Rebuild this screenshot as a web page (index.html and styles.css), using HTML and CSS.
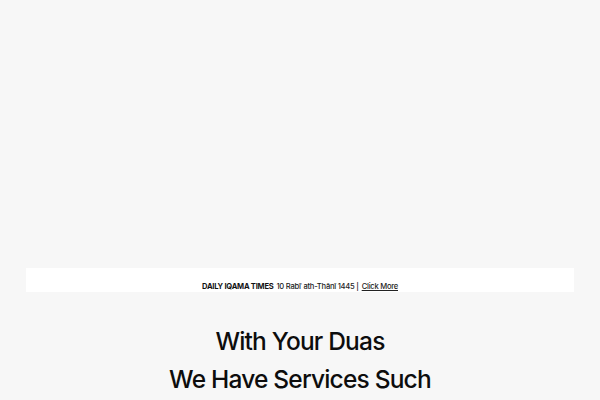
FILE: index.html
```html
<!DOCTYPE html>
<html>
<head>
<meta charset="utf-8">
<link rel="stylesheet" href="styles.css">
</head>
<body>
<div class="page">
  <div class="hero"></div>
  <div class="notice">
    <span class="label">DAILY IQAMA TIMES</span> 10 Rabīʿ ath-Thānī 1445 | <a class="more" href="#">Click More</a>
  </div>
  <section class="intro">
    <h1 class="title">With Your Duas<br>We Have Services Such</h1>
  </section>
</div>
</body>
</html>
```
FILE: styles.css
```css
html, body {
  margin: 0;
  padding: 0;
  background: #f7f7f7;
  font-family: Inter, "Noto Sans", sans-serif;
  color: #111;
}
.page {
  width: 600px;
  height: 400px;
  overflow: hidden;
}
.hero {
  height: 268px;
}
.notice {
  margin: 0 26px;
  height: 24px;
  background: #ffffff;
  display: flex;
  align-items: center;
  justify-content: center;
  font-size: 7.6px;
  font-weight: 500;
  letter-spacing: -0.25px;
  padding-top: 12px;
  box-sizing: border-box;
  color: #222;
}
.label {
  font-weight: 700;
  margin-right: 3px;
  color: #111;
}
.more {
  color: #222;
  text-decoration: underline;
  margin-left: 3px;
}
.intro {
  padding-top: 30px;
  text-align: center;
}
.title {
  margin: 0;
  font-size: 24.5px;
  font-weight: 500;
  line-height: 38px;
  letter-spacing: -0.8px;
  color: #0d0d0d;
}
```
